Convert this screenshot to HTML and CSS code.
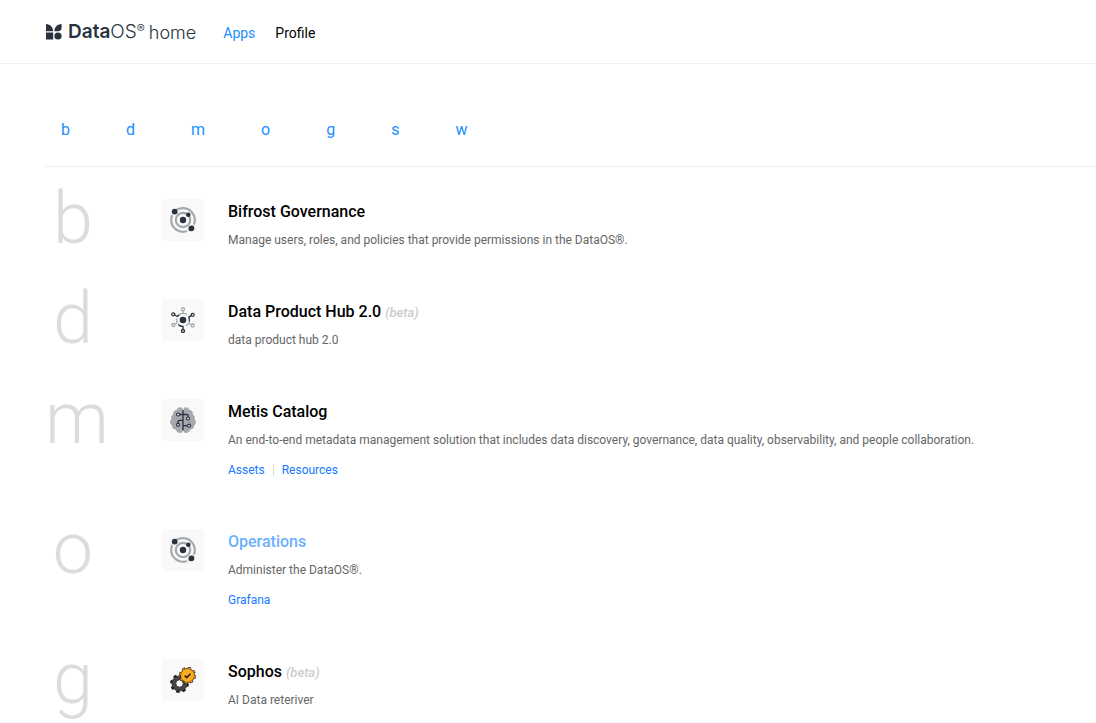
FILE: index.html
```html
<!DOCTYPE html>
<html lang="en">
<head>
<meta charset="utf-8">
<meta name="viewport" content="width=device-width, initial-scale=1">
<title>DataOS home</title>
<link rel="stylesheet" href="styles.css">
</head>
<body>
<svg class="sprite" aria-hidden="true">
  <symbol id="orbit" viewBox="0 0 26 26">
    <g fill="none" stroke="#a5a9ae" stroke-width="2.2">
      <circle cx="13" cy="13" r="11.800"/>
      <circle cx="13" cy="13" r="7.200"/>
    </g>
    <path d="M2.200 7.800l3.800-.5M7.300 3.500l1 .5M18 24.500l-1-2.500M23 18l1 .5" stroke="#f9f9f9" stroke-width="2" fill="none"/>
    <g fill="#293340">
      <circle cx="13" cy="13" r="3.200"/>
      <circle cx="4.700" cy="4.600" r="2.900"/>
      <circle cx="18.300" cy="7.800" r="2.300"/>
      <circle cx="21.400" cy="21.300" r="2.900"/>
    </g>
  </symbol>
</svg>
<header class="topbar">
  <a class="brand" href="#home" aria-label="DataOS home">
    <svg class="brand-mark" viewBox="0 0 16 16" aria-hidden="true">
      <path d="M0 0C4.500 .3 7 3 7.200 7.200H0zM15.600 0v3.800a3.600 3.600 0 0 1-3.600 3.400H8.400C8.600 3 11 .3 15.600 0zM0 8.500h7.200v7H0z"/>
      <circle cx="12" cy="12" r="3.600"/>
    </svg>
    <span class="brand-name"><b>Data</b>OS<sup>®</sup></span>
    <span class="brand-home">home</span>
  </a>
  <nav class="menu">
    <a class="menu-link active" href="#apps">Apps</a>
    <a class="menu-link" href="#profile">Profile</a>
  </nav>
</header>
<main class="content">
  <nav class="letters" aria-label="Letters">
    <a href="#b">b</a><a href="#d">d</a><a href="#m">m</a><a href="#o">o</a><a href="#g">g</a><a href="#s">s</a><a href="#w">w</a>
  </nav>
  <section class="group" id="b">
    <div class="initial">b</div>
    <div class="tile"><svg viewBox="0 0 26 26"><use href="#orbit"/></svg></div>
    <div class="info">
      <h2>Bifrost Governance</h2>
      <p>Manage users, roles, and policies that provide permissions in the DataOS®.</p>
    </div>
  </section>
  <section class="group" id="d">
    <div class="initial">d</div>
    <div class="tile">
      <svg viewBox="0 0 26 26" fill="none" stroke-width="1.300">
        <g stroke="#a5a9ae">
          <circle cx="13" cy="2.200" r="1.500"/><path d="M13 3.800v3.400M8.600 8.200A6.600 6.600 0 0 1 17 7.500"/>
          <circle cx="3.300" cy="18" r="1.500"/><path d="M4.700 17.200l2.600-1.500a6.500 6.500 0 0 1-.5-4"/>
          <circle cx="22.700" cy="18.500" r="1.500"/><path d="M21.300 17.700l-2.600-1.500a7 7 0 0 1-2.700 2.800"/>
        </g>
        <g stroke="#293340">
          <circle cx="3.300" cy="7.300" r="1.500"/><path d="M4.700 8l2.700 1.500L9 7.700"/>
          <circle cx="22.700" cy="7.800" r="1.500"/><path d="M21.300 8.600l-2.500 1.500q1 2.500 .4 4.900"/>
          <circle cx="13" cy="24" r="1.500"/><path d="M13 22.500v-3q-2.800 0-4.800-2"/>
        </g>
        <circle cx="13" cy="13" r="3.300" fill="#293340"/>
      </svg>
    </div>
    <div class="info">
      <h2>Data Product Hub 2.0 <em>(beta)</em></h2>
      <p>data product hub 2.0</p>
    </div>
  </section>
  <section class="group" id="m">
    <div class="initial">m</div>
    <div class="tile">
      <svg viewBox="0 0 26 26" fill="none">
        <path fill="#a5a9ae" d="M13 1.500C11-.6 7.500 .2 6.600 2.700 4 3 2.600 5.200 3.200 7.500 1.200 8.500 .8 10.500 1.600 12-.6 14-.4 17.200 2 18.600c-.2 2.200 1.400 4 3.600 4C6.800 26.200 11 27 13 24.500c2 2.500 6.200 1.700 7.400-1.900 2.200 0 3.800-1.800 3.600-4 2.400-1.400 2.600-4.600 .4-6.600 .8-1.500 .4-3.500-1.600-4.500 .6-2.300-.8-4.500-3.400-4.800C18.500 .2 15-.6 13 1.500z"/>
        <path stroke="#f9f9f9" d="M13 0v3M13 23v3"/>
        <path stroke="#293340" stroke-width="1.300" d="M13 3v20.500M9.200 7.500H17q1 0 1 1v1.700M13 13.300H9.500q-1.500 0-1.500 1.500v1.500M13 18.700h4.500"/>
        <g stroke="#293340" stroke-width="1.200" fill="#eceded"><circle cx="8" cy="7.500" r="1.500"/><circle cx="18" cy="11.500" r="1.500"/><circle cx="8" cy="17.800" r="1.500"/><circle cx="19" cy="18.700" r="1.500"/></g>
      </svg>
    </div>
    <div class="info">
      <h2>Metis Catalog</h2>
      <p>An end-to-end metadata management solution that includes data discovery, governance, data quality, observability, and people collaboration.</p>
      <div class="links"><a href="#assets">Assets</a><a href="#resources">Resources</a></div>
    </div>
  </section>
  <section class="group" id="o">
    <div class="initial">o</div>
    <div class="tile"><svg viewBox="0 0 26 26"><use href="#orbit"/></svg></div>
    <div class="info">
      <h2 class="hovered">Operations</h2>
      <p>Administer the DataOS®.</p>
      <div class="links"><a href="#grafana">Grafana</a></div>
    </div>
  </section>
  <section class="group" id="g">
    <div class="initial">g</div>
    <div class="tile">
      <svg viewBox="0 0 26 26" fill="none">
        <circle cx="9.500" cy="16.500" r="5.800" stroke="#444" stroke-width="4.400"/>
        <circle cx="9.500" cy="16.500" r="8.400" stroke="#1c1c1c" stroke-width="2" stroke-dasharray="3.300 3.297"/>
        <circle cx="9.500" cy="16.500" r="3.700" stroke="#222" stroke-width=".8" fill="#f9f9f9"/>
        <circle cx="17.500" cy="8.500" r="7.500" stroke="#1c1c1c" stroke-width="2.200" stroke-dasharray="3.200 2.690"/>
        <circle cx="17.500" cy="8.500" r="7" fill="#fcad1c" stroke="#33230a" stroke-width=".8"/>
        <circle cx="17.500" cy="8.500" r="7.500" stroke="#fcad1c" stroke-width="1.200" stroke-dasharray="2 3.890" stroke-dashoffset="-.6"/>
        <path d="M14.700 8.600l2 2 3.800-3.800" stroke="#222" stroke-width="1.500"/>
      </svg>
    </div>
    <div class="info">
      <h2>Sophos <em>(beta)</em></h2>
      <p>AI Data reteriver</p>
    </div>
  </section>
</main>
</body>
</html>
```
FILE: styles.css
```css
* { box-sizing: border-box; }
html { overflow: hidden; }
body { margin: 0; background: #fff; color: #000; font-family: Roboto, sans-serif; font-size: 14px; }
a { color: #1677ff; text-decoration: none; }
.sprite { display: none; }

.topbar { display: flex; align-items: center; height: 64px; padding: 0 46px; border-bottom: 1px solid #efefef; }
.brand { display: flex; align-items: center; color: #293340; }
.brand-mark { width: 16px; height: 16px; margin-right: 6px; fill: #293340; }
.brand-name { font: 300 19px/24px Inter, sans-serif; }
.brand-name b { font-weight: 600; }
.brand-name sup { font-size: 12px; line-height: 1; vertical-align: 5px; }
.brand-home { margin-left: 4px; padding-top: 2px; font: 300 18px/24px Inter, sans-serif; }
.menu { display: flex; gap: 20px; margin-left: 27px; padding-top: 2px; }
.menu-link { color: #000; line-height: 22px; }
.menu-link.active { color: #1890ff; }

.content { padding-left: 45px; }
.letters { display: flex; gap: 56px; padding: 54px 16px 25px; margin-bottom: 20px; border-bottom: 1px solid #efefef; font-size: 16px; line-height: 23px; }
.letters a { color: #1890ff; }

.group { display: flex; align-items: flex-start; padding-bottom: 36px; }
.initial { flex: none; width: 56px; height: 64px; margin-right: 61px; text-align: center; color: #dcdcdc; font-size: 72px; font-weight: 300; line-height: 64px; }
.tile { flex: none; display: grid; place-items: center; width: 42px; height: 42px; margin: 12px 24px 0 0; border-radius: 4px; background: #f9f9f9; }
.tile svg { width: 26px; height: 26px; }
.info { padding-top: 13px; }
h2 { margin: 0 0 5px; font-size: 16px; font-weight: 500; line-height: 24px; }
h2 em { color: #ccc; font-size: 13px; line-height: 1; }
.hovered { color: #69b1ff; }
p { margin: 0; color: #666; font-size: 12px; line-height: 22px; }
.links { display: flex; align-items: center; margin-top: 8px; font-size: 12px; line-height: 22px; }
.links a + a { margin-left: 8px; padding-left: 8px; border-left: 1px solid #ddd; line-height: 12px; }
```
